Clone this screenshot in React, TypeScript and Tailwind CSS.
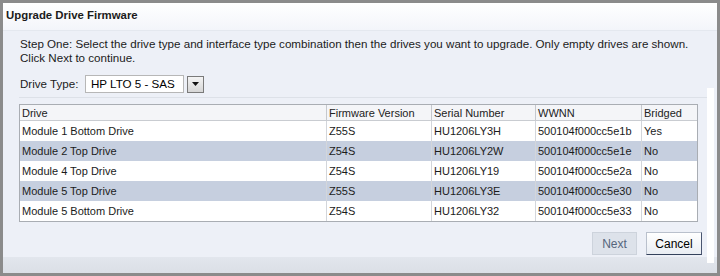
import React from "react";

const rows = [
  ["Module 1 Bottom Drive", "Z55S", "HU1206LY3H", "500104f000cc5e1b", "Yes"],
  ["Module 2 Top Drive", "Z54S", "HU1206LY2W", "500104f000cc5e1e", "No"],
  ["Module 4 Top Drive", "Z54S", "HU1206LY19", "500104f000cc5e2a", "No"],
  ["Module 5 Top Drive", "Z55S", "HU1206LY3E", "500104f000cc5e30", "No"],
  ["Module 5 Bottom Drive", "Z54S", "HU1206LY32", "500104f000cc5e33", "No"],
];

const widths = ["w-[306px]", "w-[105px]", "w-[104px]", "w-[106px]", "flex-1"];

export default function App() {
  return (
    <div
      className="w-[720px] h-[276px] bg-[#8b8b8b] p-[3px] text-[11.6px] text-[#1b1b1b]"
      style={{ fontFamily: '"Liberation Sans", Arial, sans-serif' }}
    >
      <div className="w-full h-full flex flex-col bg-[#edf0f7]">
        <div className="h-[28px] flex items-center pl-[3px] pb-[1px] font-bold text-[11.4px] bg-gradient-to-b from-white to-[#f3f5fa] border-b border-[#e4e8ef]">
          Upgrade Drive Firmware
        </div>
        <div className="relative flex-1 flex flex-col">
          <div className="flex-1 flex flex-col pl-[16px] pr-[15px]">
            <p className="mt-[6px] leading-[14px] pl-[1px]">
              Step One: Select the drive type and interface type combination then the drives you want to upgrade. Only empty drives are shown.
              <br />
              Click Next to continue.
            </p>
            <div className="flex items-center mt-[10px] h-[18px] pl-[1px]">
              <span className="w-[65px]">Drive Type:</span>
              <div className="w-[99px] h-[18px] bg-white border border-[#b7b7b7] flex items-center pl-[5px] text-[11.6px] text-black">
                HP LTO 5 - SAS
              </div>
              <div className="ml-[3px] w-[17px] h-[17px] border border-[#7a7a7a] bg-gradient-to-b from-[#f4f4f4] to-[#d6d6d6] flex items-center justify-center">
                <svg width="7" height="4" viewBox="0 0 7 4">
                  <path d="M0 0 H7 L3.5 4 Z" fill="#111" />
                </svg>
              </div>
            </div>
            <div className="mt-[4px] h-px bg-[#dde1e8] mr-[-12px]" />
            <div className="mt-[6px] w-[679px] border border-[#a9adb3] bg-white text-[11px]">
              <div className="flex h-[16px] bg-[#f4f5f8] border-b border-[#c9ccd1] text-[#222]">
                {["Drive", "Firmware Version", "Serial Number", "WWNN", "Bridged"].map((h, i) => (
                  <div
                    key={h}
                    className={`${widths[i]} ${i > 0 ? "border-l border-[#c5c8cd]" : ""} pl-[2px] leading-[16px]`}
                  >
                    {h}
                  </div>
                ))}
              </div>
              {rows.map((r, ri) => (
                <div
                  key={ri}
                  className={`flex h-[20px] ${ri % 2 === 1 ? "bg-[#c6cfdf]" : "bg-white"}`}
                >
                  {r.map((c, i) => (
                    <div
                      key={i}
                      className={`${widths[i]} ${i > 0 ? "border-l border-[#d3d6db]" : ""} pl-[2px] leading-[20px]`}
                    >
                      {c}
                    </div>
                  ))}
                </div>
              ))}
            </div>
            <div className="flex justify-end gap-[9px] mt-[10px] text-[12px]">
              <div className="w-[45px] h-[23px] flex items-center justify-center bg-[#dde2ea] border border-[#cdd3dc] text-[#55657c]">
                Next
              </div>
              <div className="w-[56px] h-[23px] flex items-center justify-center bg-gradient-to-b from-white to-[#e9edf3] border border-[#b9c0cc] border-b-[#34425c] border-r-[#4a5670] text-black">
                Cancel
              </div>
            </div>
          </div>
          <div className="h-[16px] bg-gradient-to-b from-[#e2e6ed] to-[#dbdfe6]" />
          <div className="absolute right-[3px] top-[57px] bottom-[10px] w-[7px] bg-white" />
        </div>
      </div>
    </div>
  );
}
